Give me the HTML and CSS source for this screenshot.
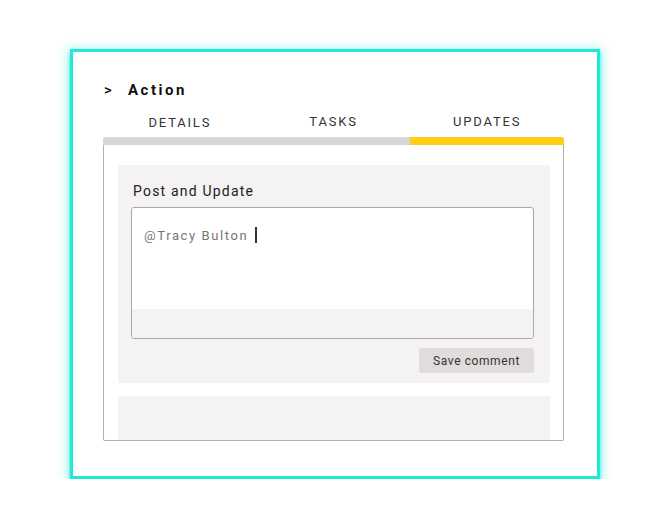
FILE: index.html
```html
<!DOCTYPE html>
<html>
<head>
<meta charset="utf-8">
<link rel="stylesheet" href="styles.css">
</head>
<body>
<div class="frame">
  <div class="header"><span class="chev">&gt;</span><span class="title">Action</span></div>
  <div class="tabs">
    <div class="tab tab-low">DETAILS</div>
    <div class="tab">TASKS</div>
    <div class="tab">UPDATES</div>
  </div>
  <div class="bar"><div class="bar-rest"></div><div class="bar-active"></div></div>
  <div class="panel">
    <div class="card">
      <div class="label">Post and Update</div>
      <div class="input">
        <div class="input-text">@Tracy Bulton<span class="cursor"></span></div>
        <div class="input-foot"></div>
      </div>
      <div class="actions"><button class="btn">Save comment</button></div>
    </div>
    <div class="card card-empty"></div>
  </div>
</div>
</body>
</html>
```
FILE: styles.css
```css
html, body {
  margin: 0;
  padding: 0;
  background: #ffffff;
}
body {
  font-family: Roboto, "Liberation Sans", sans-serif;
  color: #222;
  padding-top: 49px;
}
.frame {
  box-sizing: border-box;
  width: 530px;
  height: 430px;
  margin: 0 auto;
  border: 3px solid #1eead5;
  box-shadow: 0 3px 3px 0 rgba(30, 234, 214, 0.85), 0 2px 10px 2px rgba(30, 234, 214, 0.45);
  padding: 0 33px 0 30px;
  background: #fff;
}
.header {
  margin-top: 28px;
  height: 20px;
  line-height: 20px;
  font-size: 15px;
  font-weight: 700;
  color: #111;
  display: flex;
}
.chev {
  width: 24px;
  padding-left: 1px;
  font-size: 15px;
  font-weight: 500;
}
.title {
  letter-spacing: 2.5px;
}
.tabs {
  display: flex;
  margin-top: 14px;
  padding-bottom: 7px;
}
.tab {
  flex: 1;
  text-align: center;
  font-size: 13px;
  line-height: 16px;
  letter-spacing: 1.8px;
  color: #333;
}
.tab-low {
  padding-top: 1px;
  margin-bottom: -1px;
}
.bar {
  display: flex;
  height: 8px;
  border-radius: 2px 2px 0 0;
  overflow: hidden;
}
.bar-rest {
  flex: 2;
  background: #d7d7d7;
}
.bar-active {
  flex: 1;
  background: #ffd012;
}
.panel {
  box-sizing: border-box;
  height: 296px;
  border: 1px solid #b0b0b0;
  border-top: none;
  border-radius: 0 0 2px 2px;
  padding: 20px 13px 0 14px;
  overflow: hidden;
}
.card {
  box-sizing: border-box;
  background: #f4f2f2;
  border-radius: 2px;
  height: 218px;
  padding: 18px 16px 0 13px;
}
.card-empty {
  margin-top: 13px;
  height: 80px;
}
.label {
  font-size: 14px;
  line-height: 16px;
  letter-spacing: 1.2px;
  color: #222;
  padding-left: 2px;
}
.input {
  box-sizing: border-box;
  margin-top: 8px;
  height: 132px;
  border: 1px solid #a9a9a9;
  border-radius: 3px;
  background: #fff;
  display: flex;
  flex-direction: column;
  overflow: hidden;
}
.input-text {
  height: 101px;
  box-sizing: border-box;
  padding: 19px 0 0 12px;
  font-size: 13px;
  line-height: 16px;
  letter-spacing: 1.6px;
  color: #777;
}
.cursor {
  display: inline-block;
  width: 2px;
  height: 16px;
  background: #333;
  margin-left: 7px;
  vertical-align: -3px;
}
.input-foot {
  flex: 1;
  background: #f4f2f2;
}
.actions {
  display: flex;
  justify-content: flex-end;
  margin-top: 9px;
}
.btn {
  width: 115px;
  height: 25px;
  border: none;
  border-radius: 2px;
  background: #e0dcdb;
  font-family: Roboto, "Liberation Sans", sans-serif;
  font-size: 12px;
  letter-spacing: 0.6px;
  color: #333;
  padding: 0;
}
```
